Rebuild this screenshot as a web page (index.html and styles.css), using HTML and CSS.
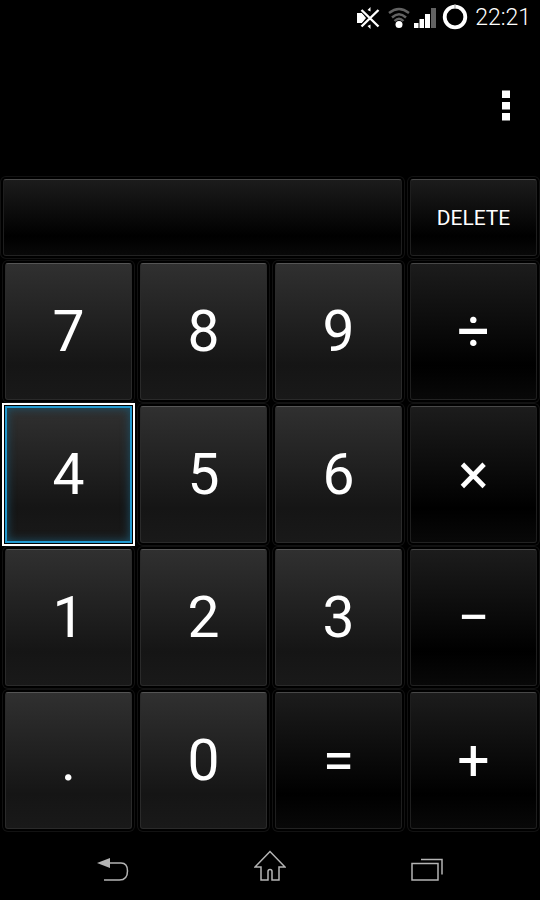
FILE: index.html
```html
<!DOCTYPE html>
<html lang="en">
<head>
    <meta charset="UTF-8">
    <meta name="viewport" content="width=device-width, initial-scale=1.0">
    <title>Calculator</title>
    <link rel="stylesheet" href="styles.css">
</head>
<body>
    <header class="status-bar">
        <svg class="muted" width="24" height="22" viewBox="0 0 24 22" aria-label="Muted">
            <path d="M1 6h5l4 5-4 5H1z" fill="#fff"/>
            <path d="M11.500 3l3-3v4.500zM11.500 19l3 3v-4.500z" fill="#fff"/>
            <path d="M6 3l17 16M22.500 3L5.500 19.500" stroke="#000" stroke-width="4.500"/>
            <path d="M5.500 3l17 16.500M22.500 3L5.500 19.500" stroke="#fff" stroke-width="2.400"/>
        </svg>
        <svg class="wifi" width="22" height="22" viewBox="0 0 22 22" aria-label="Wi-Fi">
            <g fill="none" stroke="#626262" stroke-width="2.400">
                <path d="M1 6Q11-2 21 6"/>
                <path d="M4 10.500Q11 4 18 10.500"/>
                <path d="M6.500 14Q11 9.500 15.500 14"/>
            </g>
            <circle cx="11" cy="17.500" r="3.500" fill="#fff"/>
        </svg>
        <svg class="signal" width="22" height="20" viewBox="0 0 22 20" aria-label="Signal">
            <path d="M0 15h4.500v5H0zM5.500 11h4.500v9H5.500zM11 6h5v14h-5z" fill="#fff"/>
            <path d="M17 0h5v20h-5z" fill="#626262"/>
        </svg>
        <svg class="battery" width="26" height="26" viewBox="0 0 26 26" aria-label="Battery">
            <circle cx="13" cy="13" r="10.300" fill="none" stroke="#fff" stroke-width="3.800"/>
            <path d="M13 0v4" stroke="#999" stroke-width="1"/>
        </svg>
        <time class="clock">22:21</time>
    </header>

    <div class="action-bar">
        <button class="menu" aria-label="More options">
            <svg width="8" height="32" viewBox="0 0 8 32">
                <path d="M0 0.500h8v7.500H0zM0 12h8v7.500H0zM0 23h8v7.500H0z" fill="#fff"/>
            </svg>
        </button>
    </div>

    <main class="calculator">
        <div class="top-row">
            <input class="display" type="text" aria-label="Result" readonly>
            <button class="key op delete">DELETE</button>
        </div>
        <div class="keypad">
            <button class="key">7</button>
            <button class="key">8</button>
            <button class="key">9</button>
            <button class="key op">÷</button>

            <button class="key focused">4</button>
            <button class="key">5</button>
            <button class="key">6</button>
            <button class="key op">×</button>

            <button class="key">1</button>
            <button class="key">2</button>
            <button class="key">3</button>
            <button class="key op">−</button>

            <button class="key">.</button>
            <button class="key">0</button>
            <button class="key op">=</button>
            <button class="key op">+</button>
        </div>
    </main>

    <nav class="nav-bar">
        <button aria-label="Back">
            <svg width="32" height="32" viewBox="0 0 32 32">
                <path d="M0 13L13 8v10z" fill="#b4b4b4"/>
                <path d="M12 13h12c4 0 6.500 3 6.500 8s-2 9-8 9H7" fill="none" stroke="#b4b4b4" stroke-width="1.500"/>
            </svg>
        </button>
        <button aria-label="Home">
            <svg width="32" height="32" viewBox="0 0 32 32">
                <path d="M16 1.500L1 17h6V30h7V21.500q0-2 2-2t2 2v8.500h7V17h6z" fill="none" stroke="#b4b4b4" stroke-width="1.500"/>
            </svg>
        </button>
        <button aria-label="Recent apps">
            <svg width="32" height="32" viewBox="0 0 32 32">
                <path d="M1 13.500h26v16.500H1zM10 9.500h21v15" fill="none" stroke="#b4b4b4" stroke-width="1.500"/>
            </svg>
        </button>
    </nav>
</body>
</html>
```

FILE: styles.css
```css
* {
    box-sizing: border-box;
}
body {
    margin: 0;
    min-height: 100vh;
    display: flex;
    flex-direction: column;
    background: #000;
    color: #fff;
    font-family: Roboto, sans-serif;
}
button {
    font-family: inherit;
    color: inherit;
    background: none;
    border: none;
    padding: 0;
    cursor: pointer;
}
svg {
    display: block;
}

/* status bar */
.status-bar {
    display: flex;
    align-items: center;
    justify-content: flex-end;
    height: 36px;
    padding-right: 9px;
}
.wifi {
    margin-left: 8px;
}
.signal {
    margin-left: 4px;
}
.battery {
    margin: 0 7px 2px 6px;
}
.clock {
    font-size: 23px;
    font-weight: 300;
    line-height: 36px;
}

.action-bar {
    display: flex;
    align-items: center;
    justify-content: flex-end;
    height: 140px;
    padding-right: 20px;
}
.menu {
    padding: 12px 10px;
}

/* keys */
.calculator {
    flex: 1;
    display: flex;
    flex-direction: column;
    gap: 7px;
    padding: 3px 3px 0 5px;
}
.top-row,
.keypad {
    display: grid;
    grid-template-columns: repeat(4, 1fr);
    column-gap: 8px;
}
.top-row {
    height: 77px;
}
.keypad {
    flex: 1;
    grid-auto-rows: 1fr;
    row-gap: 6px;
}
.key,
.display {
    min-width: 0;
    border: 1px solid #2a2a2a;
    border-top-color: #555;
    border-radius: 3px;
    box-shadow: 0 0 0 2px #000, 0 0 0 3px #121212;
}
.key {
    font-size: 57px;
    background: linear-gradient(#303030, #151515 75%, #191919);
}
.op,
.display {
    background: linear-gradient(#1c1c1c, #000 75%, #080808);
    border-color: #484848 #1e1e1e #222;
}
.display {
    grid-column: span 3;
    margin-left: -2px;
    padding: 0 12px;
    color: #fff;
    font: 40px Roboto, sans-serif;
    text-align: right;
}
.delete {
    font-size: 21px;
}
.focused {
    border: 2px solid #2299cf;
    border-radius: 0;
    outline: 2px solid #fff;
    outline-offset: 1px;
    box-shadow: inset 0 0 10px #1c5269;
}

/* navigation */
.nav-bar {
    display: grid;
    grid-template-columns: repeat(3, 1fr);
    height: 71px;
    padding: 0 34px;
}
.nav-bar button {
    display: flex;
    align-items: center;
    justify-content: center;
    padding-top: 2px;
}
```
